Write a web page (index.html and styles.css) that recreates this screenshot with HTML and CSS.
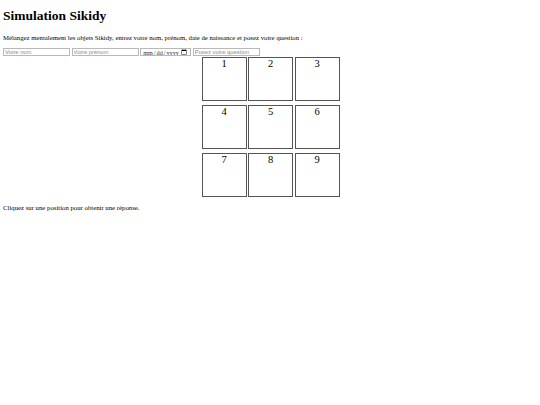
FILE: index.html
```html
<!DOCTYPE html>
<html lang="fr">
<head>
<meta charset="utf-8">
<title>Simulation Sikidy</title>
<link rel="stylesheet" href="styles.css">
</head>
<body>
<h1 class="title">Simulation Sikidy</h1>
<p class="intro">Mélangez mentalement les objets Sikidy, entrez votre nom, prénom, date de naissance et posez votre question :</p>
<div class="form">
  <input class="field" type="text" placeholder="Votre nom">
  <input class="field" type="text" placeholder="Votre prénom">
  <input class="field date" type="date">
  <input class="field" type="text" placeholder="Posez votre question">
</div>
<div class="grid">
  <div class="cell">1</div>
  <div class="cell">2</div>
  <div class="cell">3</div>
  <div class="cell">4</div>
  <div class="cell">5</div>
  <div class="cell">6</div>
  <div class="cell">7</div>
  <div class="cell">8</div>
  <div class="cell">9</div>
</div>
<p class="result">Cliquez sur une position pour obtenir une réponse.</p>
</body>
</html>
```
FILE: styles.css
```css
html { background: #fff; }
body {
  margin: 0;
  padding: 0 3px;
  font-family: "Liberation Serif", "Times New Roman", serif;
  font-size: 6.75px;
  line-height: 8px;
  color: #000;
}
.title {
  font-size: 13.5px;
  line-height: 16px;
  font-weight: bold;
  margin: 8px 0 9.7px;
}
.intro {
  margin: 0 0 6.3px;
}
.form {
  display: flex;
  gap: 1.6px;
  align-items: center;
}
.field {
  box-sizing: border-box;
  width: 67px;
  height: 8.5px;
  margin: 0;
  padding: 0 1px;
  border: 1px solid #b8b8b8;
  border-radius: 0;
  font-family: "Liberation Sans", Arial, sans-serif;
  font-size: 5.8px;
  color: #333;
  background: #fff;
}
.field::placeholder { color: #8a8a8a; }
.date {
  width: 51px;
  font-family: "Liberation Serif", serif;
  font-size: 6.2px;
}
.grid {
  display: grid;
  grid-template-columns: repeat(3, 45px);
  grid-auto-rows: 44px;
  column-gap: 1.5px;
  row-gap: 4px;
  justify-content: center;
  margin-top: 0.5px;
  padding-left: 1px;
}
.cell {
  box-sizing: border-box;
  border: 1.4px solid #555;
  text-align: center;
  font-size: 10.5px;
  line-height: 12px;
}
.result {
  margin: 6.7px 0 0;
}
```
